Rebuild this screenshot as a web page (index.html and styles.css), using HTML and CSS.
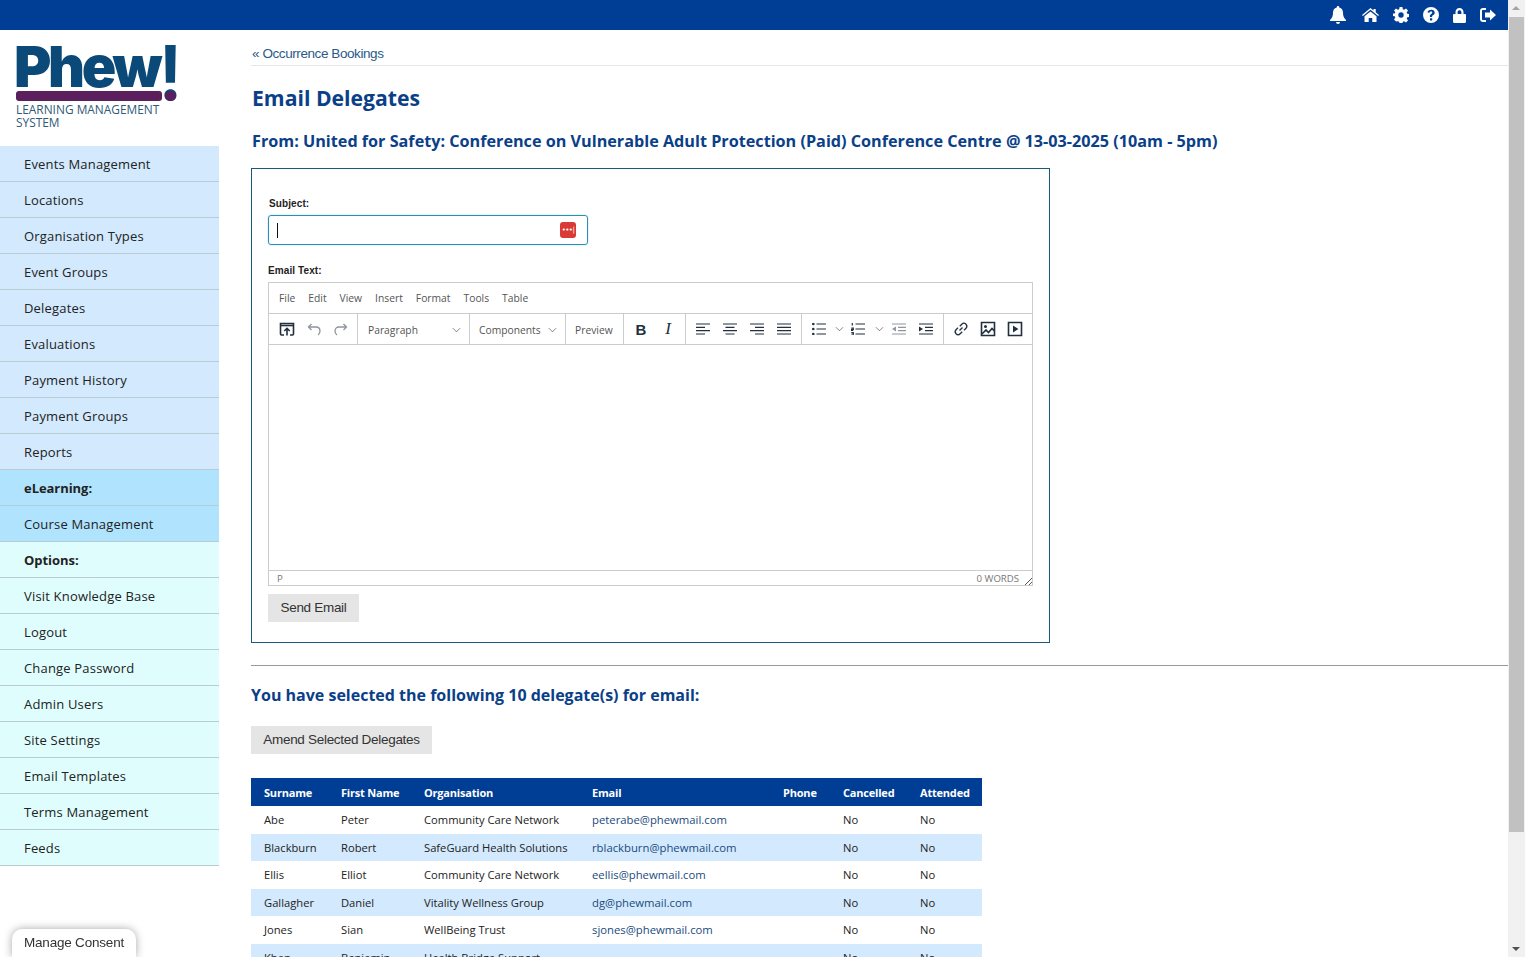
FILE: index.html
```html
<!DOCTYPE html>
<html lang="en">
<head>
<meta charset="utf-8">
<title>Email Delegates</title>
<link rel="stylesheet" href="styles.css">
</head>
<body>
<div class="app">
  <div class="page">
    <header class="topbar">
      <svg class="ti ti-bell" viewBox="0 0 16 18"><path d="M8 0a1.2 1.2 0 0 1 1.2 1.4C11.8 2 13 4 13 6.6c0 4 1 5.600 3 7.400v1H0v-1c2-1.800 3-3.400 3-7.400C3 4 4.200 2 6.800 1.400A1.200 1.200 0 0 1 8 0zM6 16h4a2 2 0 0 1-4 0z"/></svg>
      <svg class="ti ti-home" viewBox="0 0 17 14"><path d="M8.500 0l3 2.500V1h2.200v3.300L17 7l-.9 1L8.500 1.800.9 8 0 7zM2.500 8.300l6-4.900 6 4.900V14h-4.200v-4H6.700v4H2.500z"/></svg>
      <svg class="ti ti-gear" viewBox="0 0 16 16"><path fill-rule="evenodd" d="M6.600 0h2.800l.4 2.200 1.300.6L13 1.500l2 2-1.300 1.900.6 1.300 2.200.4v2.800l-2.200.4-.6 1.300 1.300 1.900-2 2-1.900-1.300-1.300.6-.4 2.200H6.600l-.4-2.200-1.300-.6L3 14.500l-2-2 1.300-1.900-.6-1.300L-.5 9V6.500l2.200-.1.600-1.300L1 3.500l2-2 1.900 1.300 1.300-.6zM8 5.300a2.700 2.700 0 1 0 0 5.400 2.700 2.700 0 0 0 0-5.400z"/></svg>
      <svg class="ti ti-help" viewBox="0 0 16 16"><path fill-rule="evenodd" d="M8 0a8 8 0 1 1 0 16A8 8 0 0 1 8 0zM7 11.200v2.200h2.200v-2.200zM8.100 2.700c-2 0-3.200 1-3.600 2.500l1.800.8c.3-.9.800-1.400 1.700-1.400.7 0 1.300.4 1.300 1 0 .6-.4.900-1.100 1.300-.9.500-1.300 1.100-1.300 2.200v.9h2.200v-.6c0-.5.200-.7.900-1.100 1-.6 1.700-1.300 1.700-2.600 0-1.800-1.500-3-2.900-3z"/></svg>
      <svg class="ti ti-lock" viewBox="0 0 13 15"><path fill-rule="evenodd" d="M6.500 0C9 0 10.500 1.700 10.500 4v2h1.300c.7 0 1.200.5 1.200 1.200v6.600c0 .7-.5 1.200-1.200 1.200H1.200C.5 15 0 14.500 0 13.800V7.200C0 6.500.5 6 1.200 6h1.300V4C2.500 1.700 4 0 6.500 0zm0 2.200C5.300 2.200 4.600 3 4.600 4.200V6h3.800V4.200c0-1.200-.7-2-1.900-2z"/></svg>
      <svg class="ti ti-out" viewBox="0 0 16 14"><path d="M6 0v2H3c-.6 0-1 .4-1 1v8c0 .6.400 1 1 1h3v2H3c-1.700 0-3-1.300-3-3V3c0-1.700 1.300-3 3-3zM10 1.500L16 7l-6 5.500V9.500H5v-5h5z"/></svg>
    </header>
    <div class="layout">
      <aside class="side">
        <div class="logo">
          <div class="logo-word">Phew<span class="bang">!</span></div>
          <div class="logo-bar"><span class="logo-line"></span><span class="logo-dot"></span></div>
          <div class="logo-text">LEARNING MANAGEMENT<br>SYSTEM</div>
        </div>
        <nav class="nav">
          <a class="nav-item blue">Events Management</a>
          <a class="nav-item blue">Locations</a>
          <a class="nav-item blue">Organisation Types</a>
          <a class="nav-item blue">Event Groups</a>
          <a class="nav-item blue">Delegates</a>
          <a class="nav-item blue">Evaluations</a>
          <a class="nav-item blue">Payment History</a>
          <a class="nav-item blue">Payment Groups</a>
          <a class="nav-item blue">Reports</a>
          <a class="nav-item sky strong">eLearning:</a>
          <a class="nav-item sky">Course Management</a>
          <a class="nav-item mint strong">Options:</a>
          <a class="nav-item mint">Visit Knowledge Base</a>
          <a class="nav-item mint">Logout</a>
          <a class="nav-item mint">Change Password</a>
          <a class="nav-item mint">Admin Users</a>
          <a class="nav-item mint">Site Settings</a>
          <a class="nav-item mint">Email Templates</a>
          <a class="nav-item mint">Terms Management</a>
          <a class="nav-item mint">Feeds</a>
        </nav>
      </aside>
      <main class="main">
        <div class="crumb"><a class="crumb-link">« Occurrence Bookings</a></div>
        <h1 class="title">Email Delegates</h1>
        <h2 class="subtitle">From: United for Safety: Conference on Vulnerable Adult Protection (Paid) Conference Centre @ 13-03-2025 (10am - 5pm)</h2>
        <form class="box">
          <label class="label label-subject">Subject:</label>
          <div class="input">
            <span class="caret"></span>
            <span class="pw-badge">•••|</span>
          </div>
          <label class="label label-text">Email Text:</label>
          <div class="editor">
            <div class="menubar">
              <span>File</span><span>Edit</span><span>View</span><span>Insert</span><span>Format</span><span>Tools</span><span>Table</span>
            </div>
            <div class="toolbar">
              <div class="grp g1">
                <svg class="ic" viewBox="0 0 16 16"><path class="s" d="M5 14H2.500a1 1 0 0 1-1-1V2.500h13V13a1 1 0 0 1-1 1H11"/><path class="s" d="M1.500 4.500h13" /><path class="s" d="M8 14.500V7.500M5.300 10L8 7.300 10.700 10"/></svg>
                <svg class="ic dim" viewBox="0 0 16 16"><path class="t" d="M5.500 3L2.500 6l3 3M2.500 6H10c2.500 0 4 1.600 4 4s-1 3-2 4"/></svg>
                <svg class="ic dim" viewBox="0 0 16 16"><path class="t" d="M10.500 3l3 3-3 3M13.500 6H6c-2.500 0-4 1.600-4 4s1 3 2 4"/></svg>
              </div>
              <div class="grp g2"><span class="sel">Paragraph</span><svg class="chev" viewBox="0 0 10 6"><path d="M1 1l4 4 4-4"/></svg></div>
              <div class="grp g3"><span class="sel">Components</span><svg class="chev" viewBox="0 0 10 6"><path d="M1 1l4 4 4-4"/></svg></div>
              <div class="grp g4"><span class="sel">Preview</span></div>
              <div class="grp g5">
                <span class="btn-b">B</span>
                <span class="btn-i">I</span>
              </div>
              <div class="grp g6">
                <svg class="ic" viewBox="0 0 14 12"><path class="b" d="M0 1h14M0 4.300h9M0 7.700h14M0 11h9"/></svg>
                <svg class="ic" viewBox="0 0 14 12"><path class="b" d="M0 1h14M2.500 4.300h9M0 7.700h14M2.500 11h9"/></svg>
                <svg class="ic" viewBox="0 0 14 12"><path class="b" d="M0 1h14M5 4.300h9M0 7.700h14M5 11h9"/></svg>
                <svg class="ic" viewBox="0 0 14 12"><path class="b" d="M0 1h14M0 4.300h14M0 7.700h14M0 11h14"/></svg>
              </div>
              <div class="grp g7">
                <svg class="ic" viewBox="0 0 14 12"><path class="b" d="M4.500 1H14M4.500 6H14M4.500 11H14"/><circle cx="1.300" cy="1" r="1.300"/><circle cx="1.300" cy="6" r="1.300"/><circle cx="1.300" cy="11" r="1.300"/></svg>
                <svg class="chev chev-a" viewBox="0 0 10 6"><path d="M1 1l4 4 4-4"/></svg>
                <svg class="ic" viewBox="0 0 14 12"><path class="b" d="M4.500 1H14M4.500 6H14M4.500 11H14M1.300 0v2.500M.3 5h2v1.300h-2v1.200h2M.3 9.500h2v3h-2M.3 11h2"/></svg>
                <svg class="chev chev-b" viewBox="0 0 10 6"><path d="M1 1l4 4 4-4"/></svg>
                <svg class="ic dim out" viewBox="0 0 14 12"><path class="b" d="M0 1h14M6 4.300h8M6 7.700h8M0 11h14"/><path d="M4 3.500v5L0 6z"/></svg>
                <svg class="ic" viewBox="0 0 14 12"><path class="b" d="M0 1h14M6 4.300h8M6 7.700h8M0 11h14"/><path d="M0 3.500v5L4 6z"/></svg>
              </div>
              <div class="grp g8">
                <svg class="ic" viewBox="0 0 16 16"><path class="t" d="M6.500 9.500l3-3M6.800 5.200l2-2a3 3 0 0 1 4.200 0 3 3 0 0 1 0 4l-2 2M9.200 10.800l-2 2a3 3 0 0 1-4.200 0 3 3 0 0 1 0-4l2-2"/></svg>
                <svg class="ic" viewBox="0 0 16 16"><path class="s" d="M1.500 1.500h13v13h-13z"/><circle cx="5.500" cy="5.500" r="1.500"/><path class="s" d="M2 13l4-4 2.500 2.500L12 7.500l2.500 2.500"/></svg>
                <svg class="ic" viewBox="0 0 16 16"><path class="s" d="M1.500 1.500h13v13h-13z"/><path d="M6 4.500v7L11.500 8z"/></svg>
              </div>
            </div>
            <div class="edit-area"></div>
            <div class="status">
              <span>P</span>
              <span class="words">0 WORDS</span>
              <svg class="grip" viewBox="0 0 8 8"><path d="M8 1L1 8M8 5L5 8"/></svg>
            </div>
          </div>
          <button type="button" class="btn btn-send">Send Email</button>
        </form>
        <hr class="rule">
        <h3 class="selected">You have selected the following 10 delegate(s) for email:</h3>
        <button type="button" class="btn btn-amend">Amend Selected Delegates</button>
        <table class="grid">
          <thead>
            <tr><th class="c1">Surname</th><th class="c2">First Name</th><th class="c3">Organisation</th><th class="c4">Email</th><th class="c5">Phone</th><th class="c6">Cancelled</th><th class="c7">Attended</th></tr>
          </thead>
          <tbody>
            <tr><td>Abe</td><td>Peter</td><td>Community Care Network</td><td class="mail">peterabe@phewmail.com</td><td></td><td>No</td><td>No</td></tr>
            <tr><td>Blackburn</td><td>Robert</td><td>SafeGuard Health Solutions</td><td class="mail">rblackburn@phewmail.com</td><td></td><td>No</td><td>No</td></tr>
            <tr><td>Ellis</td><td>Elliot</td><td>Community Care Network</td><td class="mail">eellis@phewmail.com</td><td></td><td>No</td><td>No</td></tr>
            <tr><td>Gallagher</td><td>Daniel</td><td>Vitality Wellness Group</td><td class="mail">dg@phewmail.com</td><td></td><td>No</td><td>No</td></tr>
            <tr><td>Jones</td><td>Sian</td><td>WellBeing Trust</td><td class="mail">sjones@phewmail.com</td><td></td><td>No</td><td>No</td></tr>
            <tr><td>Khan</td><td>Benjamin</td><td>Health Bridge Support</td><td class="mail"></td><td></td><td>No</td><td>No</td></tr>
          </tbody>
        </table>
      </main>
    </div>
  </div>
  <div class="scroll">
    <span class="arrow up"></span>
    <span class="thumb"></span>
    <span class="arrow down"></span>
  </div>
</div>
<div class="consent">Manage Consent</div>
</body>
</html>
```
FILE: styles.css
```css
* { box-sizing: border-box; }
html, body { margin: 0; height: 100%; overflow: hidden; background: #fff; }
body { font-family: "Open Sans", "Liberation Sans", sans-serif; color: #222; }
.app { display: flex; height: 957px; overflow: hidden; }
.page { flex: 1; min-width: 0; display: flex; flex-direction: column; }

.topbar { height: 30px; flex: none; background: #003d94; display: flex; align-items: center; justify-content: flex-end; padding-right: 12px; }
.ti { fill: #fff; display: block; flex: none; }
.ti-bell { width: 16px; height: 18px; margin-right: 16px; }
.ti-home { width: 17px; height: 14px; margin-right: 14px; }
.ti-gear { width: 16px; height: 16px; margin-right: 14px; }
.ti-help { width: 16px; height: 16px; margin-right: 14px; }
.ti-lock { width: 13px; height: 15px; margin-right: 14px; }
.ti-out { width: 16px; height: 14px; }

.layout { flex: 1; display: flex; min-height: 0; }
.side { width: 219px; flex: none; }
.logo { height: 116px; padding: 16px 0 0 14px; }
.logo-word { font-family: Inter, "Open Sans", sans-serif; font-weight: 900; font-size: 57px; line-height: 42px; height: 45px; letter-spacing: -3.300px; color: #0b4a78; white-space: nowrap; }
.bang { font-size: 76px; font-weight: 600; letter-spacing: 0; vertical-align: -13px; line-height: 0; margin-left: -1px; }
.logo-bar { display: flex; gap: 3px; height: 10px; margin: 0 0 0 2px; position: relative; }
.logo-line { width: 146px; background: #5a1f5c; border-radius: 3px; }
.logo-dot { width: 11px; background: #5a1f5c; border-radius: 50%; }
.logo-text { font-family: "Open Sans", sans-serif; font-weight: 500; font-size: 11.900px; line-height: 13px; color: #2f5a78; margin: 2px 0 0 2px; white-space: nowrap; }

.nav { display: flex; flex-direction: column; }
.nav-item { display: flex; align-items: center; height: 36px; padding: 1px 0 0 24px; font-size: 13px; letter-spacing: .18px; color: #222; border-bottom: 1px solid #b9ccd4; }
.blue { background: #d3e9fd; }
.sky { background: #b0e4fe; }
.mint { background: #e0fdfd; }
.strong { font-weight: 700; letter-spacing: -.05px; }

.main { flex: 1; min-width: 0; padding-left: 32px; }
.crumb { height: 36px; padding: 15px 0 0 1px; border-bottom: 1px solid #e6e6e6; font-family: "Liberation Sans", Arial, sans-serif; font-size: 13.500px; letter-spacing: -.42px; line-height: 17px; }
.crumb-link { color: #2a5a88; }
.title { margin: 17px 0 0 1px; font-size: 21.200px; line-height: 30px; font-weight: 700; color: #0a4088; }
.subtitle { margin: 17px 0 0 1px; font-size: 16.200px; line-height: 22px; font-weight: 700; color: #0a4088; white-space: nowrap; }
.box { width: 799px; height: 475px; margin-top: 16px; border: 1px solid #1a5a78; padding: 29px 16px 0; }
.label { display: block; font-family: "Liberation Sans", Arial, sans-serif; font-size: 10px; line-height: 12px; font-weight: 700; color: #222; letter-spacing: .1px; }
.label-subject { padding-left: 1px; }
.input { width: 320px; height: 30px; margin-top: 5px; border: 1px solid #2a8fb0; border-radius: 3px; box-shadow: 0 0 2px #a9dbe8; display: flex; align-items: center; justify-content: space-between; padding: 0 11px 0 8px; }
.caret { width: 1px; height: 15px; background: #111; }
.pw-badge { width: 16px; height: 16px; background: #d93a35; border-radius: 3px; color: #fff; font-size: 7px; line-height: 16px; letter-spacing: -.6px; text-align: center; font-family: "DejaVu Sans", sans-serif; overflow: hidden; white-space: nowrap; }
.label-text { margin-top: 20px; }
.editor { width: 765px; height: 304px; margin-top: 5px; border: 1px solid #ccc; display: flex; flex-direction: column; font-size: 10.300px; color: #555; }
.menubar { height: 30px; flex: none; display: flex; align-items: center; padding-left: 10px; gap: 13px; }
.toolbar { height: 32px; flex: none; display: flex; border-top: 1px solid #ccc; border-bottom: 1px solid #ccc; }
.grp { display: flex; align-items: center; border-right: 1px solid #ccc; flex: none; }
.g1 { width: 89px; padding-left: 10px; gap: 11px; }
.g2 { width: 112px; padding: 1px 8px 0 10px; justify-content: space-between; }
.g3 { width: 96px; padding: 1px 8px 0 9px; justify-content: space-between; }
.g4 { width: 58px; padding: 1px 0 0 9px; }
.g5 { width: 62px; }
.g6 { width: 116px; padding-left: 10px; gap: 13px; }
.g7 { width: 142px; padding-left: 10px; }
.g8 { flex: 1; border-right: 0; padding-left: 9px; gap: 11px; }
.sel { white-space: nowrap; }
.ic { width: 16px; height: 16px; display: block; flex: none; fill: #222f3e; }
.g6 .ic, .g7 .ic { width: 14px; height: 12px; }
.dim { opacity: .5; }
.s { fill: none; stroke: #222f3e; stroke-width: 1.600; }
.t { fill: none; stroke: #222f3e; stroke-width: 1.300; }
.b { fill: none; stroke: #222f3e; stroke-width: 1.200; }
.chev { width: 9px; height: 6px; fill: none; stroke: #777; stroke-width: 1; flex: none; }
.chev-a { margin: 0 7px 0 9px; }
.chev-b { margin: 0 8px 0 10px; }
.g7 .out { margin-right: 13px; }
.btn-b { width: 14px; margin-left: 10px; font-size: 15px; font-weight: 700; color: #222f3e; text-align: center; font-family: "Liberation Sans", sans-serif; }
.btn-i { width: 14px; margin-left: 13px; font-size: 17px; font-style: italic; color: #222f3e; text-align: center; font-family: "Liberation Serif", serif; }
.edit-area { flex: 1; }
.status { height: 15px; flex: none; border-top: 1px solid #ccc; display: flex; align-items: center; padding: 0 13px 0 8px; font-size: 9.600px; color: #777; position: relative; }
.words { margin-left: auto; }
.grip { width: 8px; height: 8px; position: absolute; right: 0; bottom: 0; fill: none; stroke: #555; stroke-width: 1; }
.btn { display: block; border: 0; background: #e5e5e5; color: #333; font-family: "Liberation Sans", Arial, sans-serif; font-size: 13.500px; letter-spacing: -.3px; height: 28px; padding: 0 0 2px; }
.btn-send { width: 91px; margin-top: 8px; }
.btn-amend { width: 181px; margin-top: 19px; }
.rule { height: 1px; margin: 22px 0 0; border: 0; background: #999; }
.selected { margin: 18px 0 0; font-size: 16px; line-height: 23px; font-weight: 700; color: #0a4088; }
.grid { margin-top: 24px; width: 731px; border-collapse: collapse; table-layout: fixed; font-size: 11.200px; }
.grid th { height: 28px; background: #003d94; color: #fff; text-align: left; font-weight: 700; font-size: 11px; padding: 0 0 0 13px; letter-spacing: -.2px; }
.grid td { height: 27.500px; padding: 0 0 0 13px; color: #222; white-space: nowrap; }
.grid tbody tr:nth-child(even) td { background: #d3e9fd; }
.grid td.mail { color: #1a4a80; font-size: 11.300px; }
.c1 { width: 77px; }
.c2 { width: 83px; }
.c3 { width: 168px; }
.c4 { width: 191px; }
.c5 { width: 60px; }
.c6 { width: 77px; }
.c7 { width: 75px; }

.scroll { width: 17px; flex: none; background: #f1f1f1; display: flex; flex-direction: column; align-items: center; }
.arrow { height: 17px; flex: none; width: 17px; position: relative; }
.arrow::after { content: ""; position: absolute; left: 4px; border: 4px solid transparent; }
.up::after { top: 2px; border-bottom-color: #a3a3a3; }
.down::after { bottom: 2px; border-top-color: #505050; }
.thumb { width: 15px; height: 815px; background: #c1c1c1; flex: none; margin-bottom: auto; }

.consent { position: fixed; left: 12px; top: 929px; width: 124px; height: 28px; background: #fff; border-radius: 10px 10px 0 0; box-shadow: 0 0 8px rgba(0,0,0,.35); font-family: "Liberation Sans", Arial, sans-serif; font-size: 13.500px; letter-spacing: -.2px; line-height: 27px; text-align: center; color: #333; }
```
